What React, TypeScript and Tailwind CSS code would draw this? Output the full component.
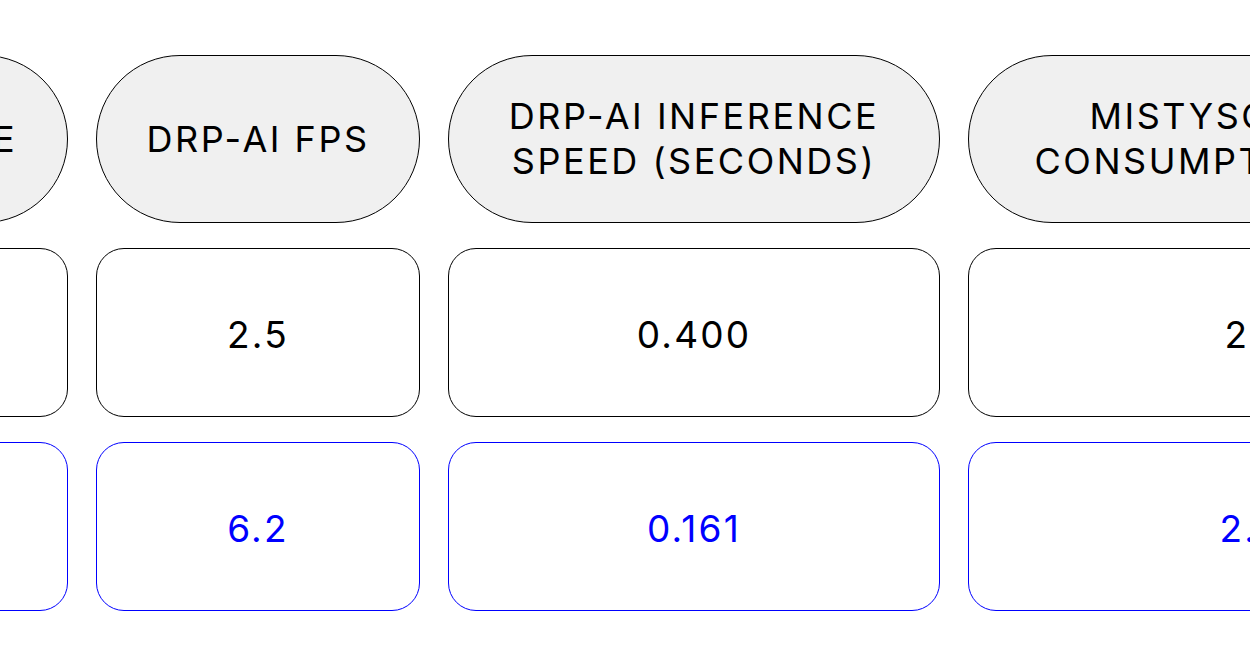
const headers = [
  "INPUT SIZE",
  "DRP-AI FPS",
  "DRP-AI INFERENCE SPEED (SECONDS)",
  "MISTYSOM POWER CONSUMPTION (WATTS)",
];

const before = ["640x640", "2.5", "0.400", "2.1 W"];
const after = ["640x640", "6.2", "0.161", "2.3 W"];

const font = { fontFamily: "Inter, 'Liberation Sans', sans-serif" };

export default function App() {
  return (
    <div className="w-[1250px] h-[666px] bg-white overflow-hidden" style={font}>
      <div className="grid w-max grid-cols-[324px_324px_492px_616px] gap-x-[28px] gap-y-[25px] ml-[-256px] pt-[55px] text-black">
        {headers.map((h) => (
          <div
            key={h}
            className="h-[168px] rounded-full border border-black bg-[#f0f0f0] flex items-center justify-center text-center px-6 text-[36px] leading-[45px] tracking-[0.07em]"
          >
            {h}
          </div>
        ))}
        {before.map((v, i) => (
          <div
            key={"b" + i}
            className="h-[169px] rounded-[28px] border border-black flex items-center justify-center pt-[4px] text-[37px] tracking-[0.06em]"
          >
            {v}
          </div>
        ))}
        {after.map((v, i) => (
          <div
            key={"a" + i}
            className="h-[169px] rounded-[28px] border border-[#0000ff] text-[#0000ff] flex items-center justify-center pt-[4px] text-[37px] tracking-[0.06em]"
          >
            {v}
          </div>
        ))}
      </div>
    </div>
  );
}
